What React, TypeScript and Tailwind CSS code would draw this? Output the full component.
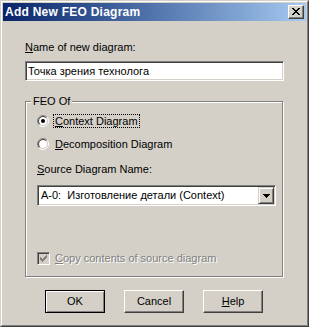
import React from "react";

function Radio({ checked }: { checked: boolean }) {
  const arc = (r: number) => {
    const d = r * 0.7071;
    return {
      tl: `M ${6 - d} ${6 + d} A ${r} ${r} 0 0 1 ${6 + d} ${6 - d}`,
      br: `M ${6 + d} ${6 - d} A ${r} ${r} 0 0 1 ${6 - d} ${6 + d}`,
    };
  };
  const o = arc(5.5);
  const i = arc(4.5);
  return (
    <svg width="12" height="12" viewBox="0 0 12 12" className="shrink-0">
      <circle cx="6" cy="6" r="4.5" fill="#ffffff" />
      <path d={o.tl} stroke="#808080" strokeWidth="1" fill="none" />
      <path d={o.br} stroke="#ffffff" strokeWidth="1" fill="none" />
      <path d={i.tl} stroke="#404040" strokeWidth="1" fill="none" />
      <path d={i.br} stroke="#d4d0c8" strokeWidth="1" fill="none" />
      {checked && <circle cx="6" cy="6" r="2" fill="#000000" />}
    </svg>
  );
}

function DisabledCheck() {
  const cols = [2, 3, 4, 3, 2, 1, 0];
  return (
    <div className="w-[13px] h-[13px] shrink-0 border border-t-[#808080] border-l-[#808080] border-r-white border-b-white shadow-[inset_1px_1px_0_#404040,inset_-1px_-1px_0_#d4d0c8] bg-[#d4d0c8]">
      <svg width="11" height="11" viewBox="0 0 11 11" shapeRendering="crispEdges">
        {cols.map((y, x) => (
          <rect key={x} x={2 + x} y={2 + y} width="1" height="3" fill="#808080" />
        ))}
      </svg>
    </div>
  );
}

function CloseGlyph() {
  const rows: [number, number][][] = [
    [[0, 2], [6, 2]],
    [[1, 2], [5, 2]],
    [[2, 4]],
    [[3, 2]],
    [[2, 4]],
    [[1, 2], [5, 2]],
    [[0, 2], [6, 2]],
  ];
  return (
    <svg width="8" height="7" viewBox="0 0 8 7" shapeRendering="crispEdges">
      {rows.map((segs, y) =>
        segs.map(([x, w], k) => <rect key={`${y}-${k}`} x={x} y={y} width={w} height="1" fill="#000" />)
      )}
    </svg>
  );
}

function DownArrow() {
  return (
    <svg width="7" height="4" viewBox="0 0 7 4" shapeRendering="crispEdges">
      <rect x="0" y="0" width="7" height="1" fill="#000" />
      <rect x="1" y="1" width="5" height="1" fill="#000" />
      <rect x="2" y="2" width="3" height="1" fill="#000" />
      <rect x="3" y="3" width="1" height="1" fill="#000" />
    </svg>
  );
}

export default function App() {
  return (
    <div className="w-[309px] h-[327px] bg-[#d4d0c8] border border-t-[#d4d0c8] border-l-[#d4d0c8] border-r-[#404040] border-b-[#404040] font-['Liberation_Sans',Arial,sans-serif] text-[11px] text-black">
      <div className="w-full h-full border border-t-white border-l-white border-r-[#808080] border-b-[#808080] p-[1px] flex flex-col">
        {/* Title bar */}
        <div className="h-[18px] flex items-center justify-between bg-gradient-to-r from-[#0a246a] to-[#a6caf0] pl-[2px] pr-[2px]">
          <span className="text-white font-bold text-[12px] tracking-[0.25px] leading-[14px] whitespace-nowrap">Add New FEO Diagram</span>
          <div className="w-[16px] h-[14px] flex items-center justify-center bg-[#d4d0c8] border border-t-white border-l-white border-r-[#404040] border-b-[#404040] shadow-[inset_-1px_-1px_0_#808080] pb-[1px] pr-[1px]">
            <CloseGlyph />
          </div>
        </div>

        {/* Client */}
        <div className="flex flex-col pl-[22px]">
          <div className="mt-[20px] leading-[13px] whitespace-nowrap">
            <u>N</u>ame of new diagram:
          </div>
          <div className="mt-[7px] w-[259px] h-[20px] bg-white border border-t-[#808080] border-l-[#808080] border-r-white border-b-white shadow-[inset_1px_1px_0_#404040,inset_-1px_-1px_0_#d4d0c8] flex items-center pl-[2px] leading-[13px] whitespace-nowrap">
            Точка зрения технолога
          </div>

          {/* Group box */}
          <div className="mt-[20px] w-[258px] h-[176px] border border-[#808080] shadow-[inset_1px_1px_0_white,1px_1px_0_white] flex flex-col">
            <span className="-mt-[7px] ml-[5px] px-[2px] self-start bg-[#d4d0c8] leading-[13px] whitespace-nowrap">
              FEO Of
            </span>

            <div className="mt-[6px] pl-[11px] flex items-center gap-[4px]">
              <Radio checked />
              <span className="border border-dotted border-black px-[1px] leading-[12px] whitespace-nowrap">
                <u>C</u>ontext Diagram
              </span>
            </div>

            <div className="mt-[9px] pl-[11px] flex items-center gap-[4px]">
              <Radio checked={false} />
              <span className="border border-transparent px-[1px] leading-[12px] whitespace-nowrap">
                <u>D</u>ecomposition Diagram
              </span>
            </div>

            <div className="mt-[12px] ml-[11px] leading-[13px] whitespace-nowrap">
              <u>S</u>ource Diagram Name:
            </div>

            <div className="mt-[9px] ml-[11px] w-[239px] h-[21px] bg-white border border-t-[#808080] border-l-[#808080] border-r-white border-b-white shadow-[inset_1px_1px_0_#404040,inset_-1px_-1px_0_#d4d0c8] p-[1px] flex">
              <div className="flex-1 flex items-center pl-[2px] leading-[13px] whitespace-pre overflow-hidden">
                A-0:  Изготовление детали (Context)
              </div>
              <div className="w-[16px] h-full bg-[#d4d0c8] border border-t-[#d4d0c8] border-l-[#d4d0c8] border-r-[#404040] border-b-[#404040] shadow-[inset_1px_1px_0_white,inset_-1px_-1px_0_#808080] flex items-center justify-center">
                <DownArrow />
              </div>
            </div>

            <div className="mt-[46px] ml-[11px] h-[13px] flex items-center gap-[5px]">
              <DisabledCheck />
              <span className="text-[#808080] [text-shadow:1px_1px_0_#ffffff] leading-[13px] whitespace-nowrap">
                <u>C</u>opy contents of source diagram
              </span>
            </div>
          </div>

          {/* Buttons */}
          <div className="mt-[13px] ml-[20px] flex gap-[19px]">
            <button className="w-[60px] h-[23px] bg-[#d4d0c8] border border-black shadow-[inset_1px_1px_0_white,inset_-1px_-1px_0_#808080] leading-[13px]">
              OK
            </button>
            <button className="w-[60px] h-[23px] bg-[#d4d0c8] border border-t-white border-l-white border-r-[#404040] border-b-[#404040] shadow-[inset_-1px_-1px_0_#808080] leading-[13px]">
              Cancel
            </button>
            <button className="w-[60px] h-[23px] bg-[#d4d0c8] border border-t-white border-l-white border-r-[#404040] border-b-[#404040] shadow-[inset_-1px_-1px_0_#808080] leading-[13px]">
              <u>H</u>elp
            </button>
          </div>
        </div>
      </div>
    </div>
  );
}
